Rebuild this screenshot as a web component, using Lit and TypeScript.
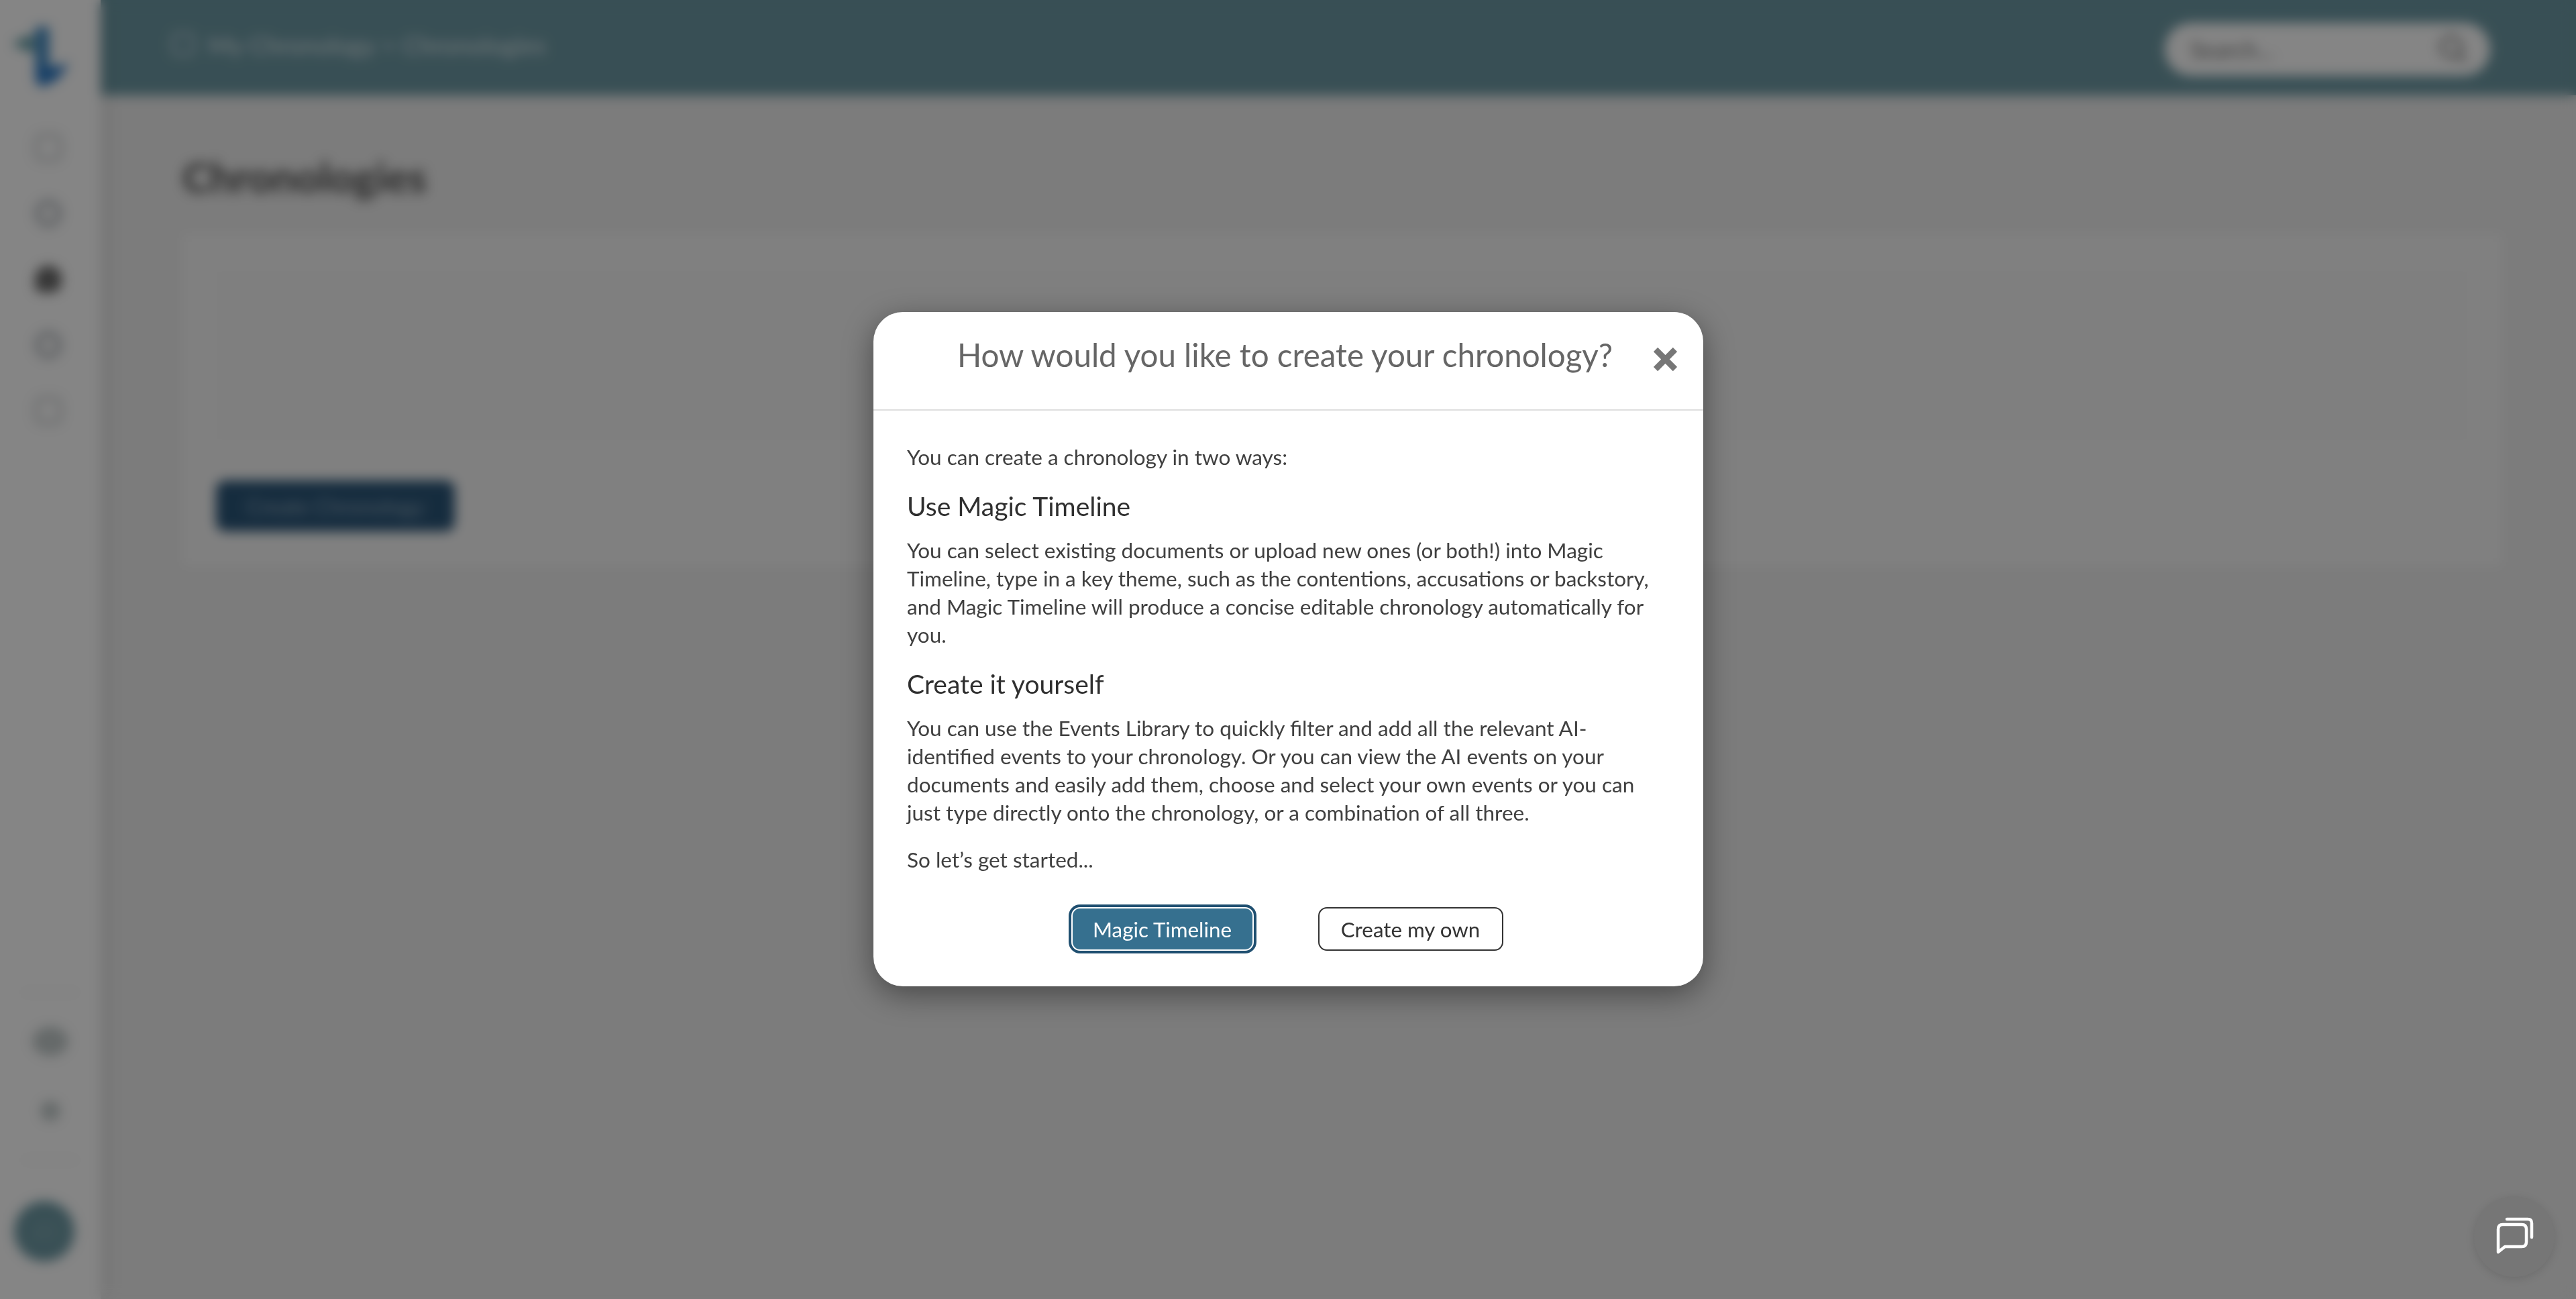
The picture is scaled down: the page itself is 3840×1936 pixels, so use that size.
import { css, html, LitElement, svg } from 'lit';
import { customElement } from 'lit/decorators.js';

const NAV_KINDS = ['', 'mid', 'active', 'mid', ''];

@customElement('app-root')
export class AppRoot extends LitElement {
  static override styles = css`
    :host {
      display: block;
      position: relative;
      height: 100vh;
      overflow: hidden;
      font-family: Lato, "Open Sans", sans-serif;
      background: #ededed;
    }

    .page {
      display: flex;
      height: 100%;
    }

    .sidebar {
      flex: none;
      width: 150px;
      display: flex;
      flex-direction: column;
      align-items: center;
      background: #fff;
      padding-top: 30px;
      box-sizing: border-box;
      box-shadow: 4px 0 24px rgba(0, 0, 0, 0.1);
      position: relative;
    }

    .logo {
      width: 110px;
      height: 110px;
      align-self: flex-start;
      margin: 0 0 60px 8px;
    }

    .nav {
      display: flex;
      flex-direction: column;
      gap: 58px;
      margin-left: -6px;
    }

    .nav-icon {
      width: 40px;
      height: 40px;
      border-radius: 10px;
      border: 4px solid #b4b9bc;
      box-sizing: border-box;
    }

    .nav-icon.mid {
      border: 7px solid #a8aeb4;
      border-radius: 50%;
    }

    .nav-icon.active {
      background: #6a6a6a;
      border-color: #6a6a6a;
      border-radius: 50% 50% 40% 10px;
    }

    .sidebar-foot {
      margin-top: auto;
      width: 100%;
      display: flex;
      flex-direction: column;
      align-items: center;
      padding-bottom: 56px;
    }

    .rule {
      width: 84px;
      height: 2px;
      background: #efefef;
    }

    .foot-icon {
      border-radius: 50%;
      background: #c2caca;
    }

    .foot-icon.one {
      width: 54px;
      height: 44px;
      margin: 50px 0 67px;
    }

    .foot-icon.two {
      width: 30px;
      height: 30px;
      margin-bottom: 57px;
    }

    .avatar {
      width: 90px;
      height: 90px;
      margin: 60px 18px 0 0;
      border-radius: 50%;
      background: #6c98a3;
      color: #88acb5;
      font-size: 36px;
      display: flex;
      align-items: center;
      justify-content: center;
    }

    .content {
      flex: 1;
      min-width: 0;
    }

    .topbar {
      height: 142px;
      display: flex;
      align-items: center;
      justify-content: space-between;
      padding: 0 128px 0 106px;
      background: #6c98a3;
      color: #dfe9ec;
      font-size: 37px;
      box-sizing: border-box;
    }

    .crumbs {
      display: flex;
      align-items: center;
      gap: 20px;
      margin-top: -10px;
    }

    .crumb-icon {
      width: 34px;
      height: 34px;
      border: 3px solid #dfe9ec;
      border-radius: 8px;
      box-sizing: border-box;
    }

    .search {
      width: 485px;
      height: 79px;
      margin-top: 4px;
      display: flex;
      align-items: center;
      justify-content: space-between;
      padding: 0 30px 0 38px;
      box-sizing: border-box;
      border-radius: 40px;
      background: #fff;
      color: #777;
      font-size: 34px;
    }

    .search svg {
      width: 50px;
      height: 50px;
    }

    .main {
      padding: 82px 110px 0 122px;
    }

    .main h1 {
      margin: 0 0 46px;
      font-size: 62px;
      line-height: 78px;
      font-weight: 700;
      color: #4a4a4a;
    }

    .card {
      height: 496px;
      padding: 54px 50px;
      background: #f6f6f6;
      box-sizing: border-box;
    }

    .panel {
      height: 256px;
      background: #f4f4f4;
      border: 1px solid #ececec;
      box-sizing: border-box;
    }

    .cta {
      width: 356px;
      height: 76px;
      margin-top: 58px;
      display: flex;
      align-items: center;
      justify-content: center;
      border-radius: 14px;
      background: #2a5578;
      color: #8ea8ba;
      font-size: 32px;
    }

    .overlay {
      position: absolute;
      inset: 0;
      z-index: 2;
      background: rgba(0, 0, 0, 0.48);
      backdrop-filter: blur(9px);
    }

    .modal {
      position: absolute;
      z-index: 3;
      left: 1302px;
      top: 465px;
      width: 1237px;
      height: 1005px;
      background: #fff;
      border-radius: 44px;
      box-shadow: 0 12px 46px rgba(0, 0, 0, 0.42);
      color: #404040;
    }

    .modal-head {
      height: 147px;
      padding: 0 10px 18px 0;
      display: flex;
      align-items: center;
      justify-content: center;
      box-sizing: border-box;
      border-bottom: 2px solid #dedede;
    }

    .modal-head h2 {
      margin: 0;
      font-size: 47.5px;
      font-weight: 400;
      color: #666;
    }

    .close {
      position: absolute;
      left: 1163px;
      top: 53px;
      width: 35px;
      height: 35px;
    }

    .modal-body {
      padding: 48px 50px 0;
      font-size: 31.5px;
      line-height: 42px;
    }

    .modal-body p {
      margin: 0;
    }

    .modal-body h3 {
      margin: 29px 0 22px;
      font-size: 39px;
      line-height: 46px;
      font-weight: 400;
      color: #2f2f2f;
    }

    .modal-body .start {
      margin-top: 28px;
    }

    .actions {
      display: flex;
      justify-content: center;
      gap: 96px;
      margin: 50px 4px 0 0;
    }

    .btn {
      height: 65px;
      display: flex;
      align-items: center;
      justify-content: center;
      box-sizing: border-box;
      border-radius: 13px;
      border: 2.5px solid #333;
      background: #fff;
      color: #333;
      font-size: 31.3px;
    }

    .btn.primary {
      width: 272px;
      border: 2px solid #fff;
      background: #36708f;
      color: #fff;
      box-shadow: 0 0 0 4px #1f4f70;
    }

    .btn.secondary {
      width: 276px;
    }

    .chat {
      position: absolute;
      z-index: 3;
      left: 3688px;
      top: 1783px;
      width: 120px;
      height: 120px;
      border-radius: 50%;
      background: #767676;
      box-shadow: 0 3px 14px rgba(0, 0, 0, 0.12);
    }

    .chat svg {
      display: block;
    }
  `;

  private _logo() {
    return svg`
      <path d="M15 35 L40 25 L40 45 Z" fill="#5f9aa3" stroke="#5f9aa3" stroke-width="6" stroke-linejoin="round"/>
      <path d="M45 10 H65 V70 H45 Z" fill="#3d86c0"/>
      <path d="M45 65 L65 70 L95 65 L78 88 L55 100 L45 92 Z" fill="#2a78c4"/>
    `;
  }

  protected override render() {
    return html`
      <div class="page">
        <aside class="sidebar">
          <svg class="logo" viewBox="0 0 110 110">${this._logo()}</svg>
          <div class="nav">
            ${NAV_KINDS.map((kind) => html`<div class="nav-icon ${kind}"></div>`)}
          </div>
          <div class="sidebar-foot">
            <div class="rule"></div>
            <div class="foot-icon one"></div>
            <div class="foot-icon two"></div>
            <div class="rule"></div>
            <div class="avatar">JD</div>
          </div>
        </aside>
        <div class="content">
          <header class="topbar">
            <div class="crumbs">
              <div class="crumb-icon"></div>
              <span>My Chronology &gt; Chronologies</span>
            </div>
            <div class="search">
              <span>Search...</span>
              <svg viewBox="0 0 50 50" fill="none" stroke="#666" stroke-width="4">
                <circle cx="22" cy="22" r="15"></circle>
                <path d="M33 33 L44 44"></path>
              </svg>
            </div>
          </header>
          <main class="main">
            <h1>Chronologies</h1>
            <section class="card">
              <div class="panel"></div>
              <div class="cta">Create Chronology</div>
            </section>
          </main>
        </div>
      </div>

      <div class="overlay"></div>

      <div class="modal">
        <div class="modal-head">
          <h2>How would you like to create your chronology?</h2>
        </div>
        <svg class="close" viewBox="0 0 35 35" stroke="#777" stroke-width="9">
          <path d="M3 3 L32 32 M32 3 L3 32"></path>
        </svg>
        <div class="modal-body">
          <p>You can create a chronology in two ways:</p>
          <h3>Use Magic Timeline</h3>
          <p>
            You can select existing documents or upload new ones (or both!) into Magic<br />
            Timeline, type in a key theme, such as the contentions, accusations or backstory,<br />
            and Magic Timeline will produce a concise editable chronology automatically for<br />
            you.
          </p>
          <h3>Create it yourself</h3>
          <p>
            You can use the Events Library to quickly filter and add all the relevant AI-<br />
            identified events to your chronology. Or you can view the AI events on your<br />
            documents and easily add them, choose and select your own events or you can<br />
            just type directly onto the chronology, or a combination of all three.
          </p>
          <p class="start">So let’s get started...</p>
          <div class="actions">
            <div class="btn primary">Magic Timeline</div>
            <div class="btn secondary">Create my own</div>
          </div>
        </div>
      </div>

      <div class="chat">
        <svg width="120" height="120" viewBox="0 0 120 120" fill="none" stroke="#fff" stroke-width="4.5" stroke-linecap="round" stroke-linejoin="round">
          <path d="M36 83 V49 Q36 42 43 42 H71 Q78 42 78 49 V68 Q78 75 71 75 H46 Z"></path>
          <path d="M49 34 H80 Q86 34 86 40 V61"></path>
        </svg>
      </div>
    `;
  }
}
